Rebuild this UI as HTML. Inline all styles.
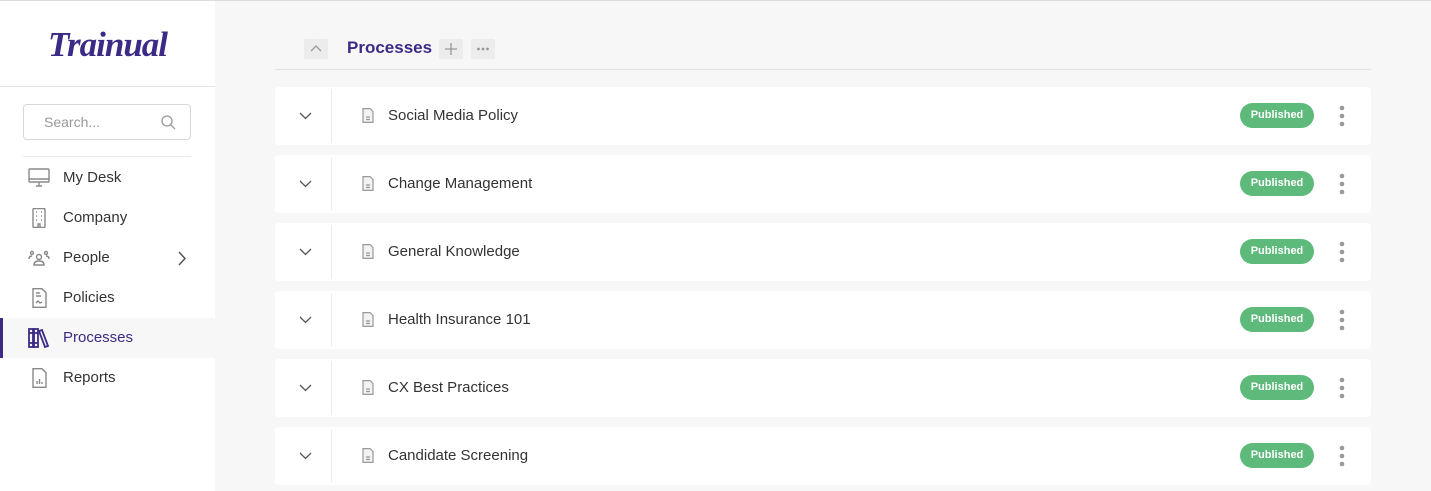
<!DOCTYPE html>
<html><head><meta charset="utf-8"><style>
*{box-sizing:border-box;margin:0;padding:0}
body{width:1431px;height:491px;overflow:hidden;background:#f7f7f7;font-family:"Liberation Sans",sans-serif;position:relative}
.topline{position:absolute;left:0;top:0;width:1431px;height:1px;background:#dcdcdc;z-index:5}
.side{position:absolute;left:0;top:1px;width:215px;height:490px;background:#fff}
.logo{position:absolute;left:0;top:0;width:215px;height:86px;border-bottom:1px solid #e4e4e4;text-align:center;font-family:"Liberation Serif",serif;font-style:italic;font-weight:bold;font-size:35px;color:#3d2a86;line-height:88px;letter-spacing:-1px}
.search{position:absolute;left:23px;top:103px;width:168px;height:36px;border:1px solid #d8d8d8;border-radius:4px;font-size:14px;color:#999;padding:9px 0 0 20px}
.hr{position:absolute;left:23px;top:155px;width:168px;border-top:1px solid #eaeaea}
.nav{position:absolute;left:0;width:215px;height:40px;font-size:15px;color:#333;padding-left:63px;line-height:40px}
.nav svg{position:absolute;left:28px;top:10px}
.nav.act{background:#f7f7f7;color:#3d2a86;border-left:3px solid #3d2a86}
.hdr{position:absolute;left:275px;top:69px;width:1096px;border-top:1px solid #e2e2e2}
.btn{position:absolute;top:39px;width:24px;height:20px;background:#ececec;border-radius:2px}
.title{position:absolute;left:347px;top:38px;font-size:17px;font-weight:bold;color:#3d2a86}
.row{position:absolute;left:275px;width:1096px;height:58px;background:#fff;border-radius:4px}
.row .div{position:absolute;left:56px;top:2px;height:54px;border-left:1px solid #ececec}
.row .name{position:absolute;left:113px;top:20px;font-size:15px;color:#333}
.row .badge{position:absolute;left:965px;top:16px;width:74px;height:25px;border-radius:13px;background:#5eba7a;color:#fff;font-size:11px;font-weight:bold;text-align:center;line-height:25px}
.row .dots{position:absolute;left:1064px;top:18px}
.row .chev{position:absolute;left:24px;top:25px}
.row .doc{position:absolute;left:87px;top:21px}
</style></head><body>
<div class="topline"></div>
<div class="side">
<div class="logo">Trainual</div>
<div class="search">Search...<svg style="position:absolute;right:14px;top:10px" width="15" height="15" viewBox="0 0 15 15" fill="none" stroke="#999" stroke-width="1.3"><circle cx="6" cy="6" r="5"/><path d="M10 10l4 4"/></svg></div>
<div class="hr"></div>
<div class="nav" style="top:157px"><svg width="22" height="20" viewBox="0 0 22 20" fill="none" stroke="#888" stroke-width="1.4"><rect x="1" y="1" width="20" height="13" rx="1"/><path d="M1 11h20M8 18h6M11 14v4"/></svg>My Desk</div>
<div class="nav" style="top:197px"><svg width="22" height="20" viewBox="0 0 22 20" fill="none" stroke="#888" stroke-width="1.4"><rect x="5" y="0.5" width="12" height="19" rx="1"/><path d="M8 4h1M13 4h1M8 8h1M13 8h1M8 12h1M13 12h1M10 19v-3h2v3"/></svg>Company</div>
<div class="nav" style="top:237px"><svg width="22" height="20" viewBox="0 0 22 20" fill="none" stroke="#888" stroke-width="1.4"><circle cx="11" cy="9" r="2.5"/><path d="M6 17c0-3 2-4 5-4s5 1 5 4z"/><circle cx="4" cy="5" r="1.5"/><circle cx="18" cy="5" r="1.5"/><path d="M1 11c0-2 1-3 3-3M21 11c0-2-1-3-3-3"/></svg>People<svg style="left:177px;top:13px" width="10" height="15" viewBox="0 0 10 15" fill="none" stroke="#555" stroke-width="1.5"><path d="M2 1l6 6.5-6 6.5"/></svg></div>
<div class="nav" style="top:277px"><svg width="22" height="20" viewBox="0 0 22 20" fill="none" stroke="#888" stroke-width="1.4"><path d="M5 0.7h9l4 4v14.6H5z"/><path d="M8 5h4M8 8h5M8 15l2-2 2 2 2-1"/></svg>Policies</div>
<div class="nav act" style="top:317px;padding-left:60px"><svg style="left:25px" width="22" height="20" viewBox="0 0 22 20" fill="none" stroke="#3d2a86" stroke-width="1.8"><rect x="1" y="1" width="4" height="18"/><rect x="6" y="1" width="4" height="18"/><path d="M11 3l3-1 6 16-3 1z"/><path d="M1 5h4M6 5h4M1 15h4M6 15h4"/></svg>Processes</div>
<div class="nav" style="top:357px"><svg width="22" height="20" viewBox="0 0 22 20" fill="none" stroke="#888" stroke-width="1.4"><path d="M5 0.7h9l4 4v14.6H5z"/><path d="M9 16v-3M11.5 16v-5M14 16v-2"/></svg>Reports</div>
</div>
<div class="btn" style="left:304px"><svg width="24" height="20" viewBox="0 0 24 20" fill="none" stroke="#999" stroke-width="1.3"><path d="M7 12l5-5 5 5"/></svg></div>
<div class="title">Processes</div>
<div class="btn" style="left:439px"><svg width="24" height="20" viewBox="0 0 24 20" fill="none" stroke="#999" stroke-width="1.3"><path d="M12 4v12M6 10h12"/></svg></div>
<div class="btn" style="left:471px"><svg width="24" height="20" viewBox="0 0 24 20" fill="#999"><circle cx="7.5" cy="10" r="1.4"/><circle cx="12" cy="10" r="1.4"/><circle cx="16.5" cy="10" r="1.4"/></svg></div>
<div class="hdr"></div>
<div id="rows"></div>
<script>
var n=["Social Media Policy","Change Management","General Knowledge","Health Insurance 101","CX Best Practices","Candidate Screening"],h="";
n.forEach(function(t,i){h+='<div class="row" style="top:'+(87+68*i)+'px"><svg class="chev" width="13" height="8" viewBox="0 0 13 8" fill="none" stroke="#555" stroke-width="1.3"><path d="M1 1l5.5 5.5L12 1"/></svg><div class="div"></div><svg class="doc" width="12" height="15" viewBox="0 0 12 15" fill="#f2f2f2" stroke="#999" stroke-width="1.2"><path d="M1 .6h7l3 3V14.4H1z"/><path d="M4 9h4M4 11.5h4" fill="none"/></svg><div class="name">'+t+'</div><div class="badge">Published</div><svg class="dots" width="6" height="22" viewBox="0 0 6 22" fill="#999"><circle cx="3" cy="3" r="2.3"/><circle cx="3" cy="11" r="2.3"/><circle cx="3" cy="19" r="2.3"/></svg></div>'});
document.getElementById("rows").innerHTML=h;
</script>
</body></html>
